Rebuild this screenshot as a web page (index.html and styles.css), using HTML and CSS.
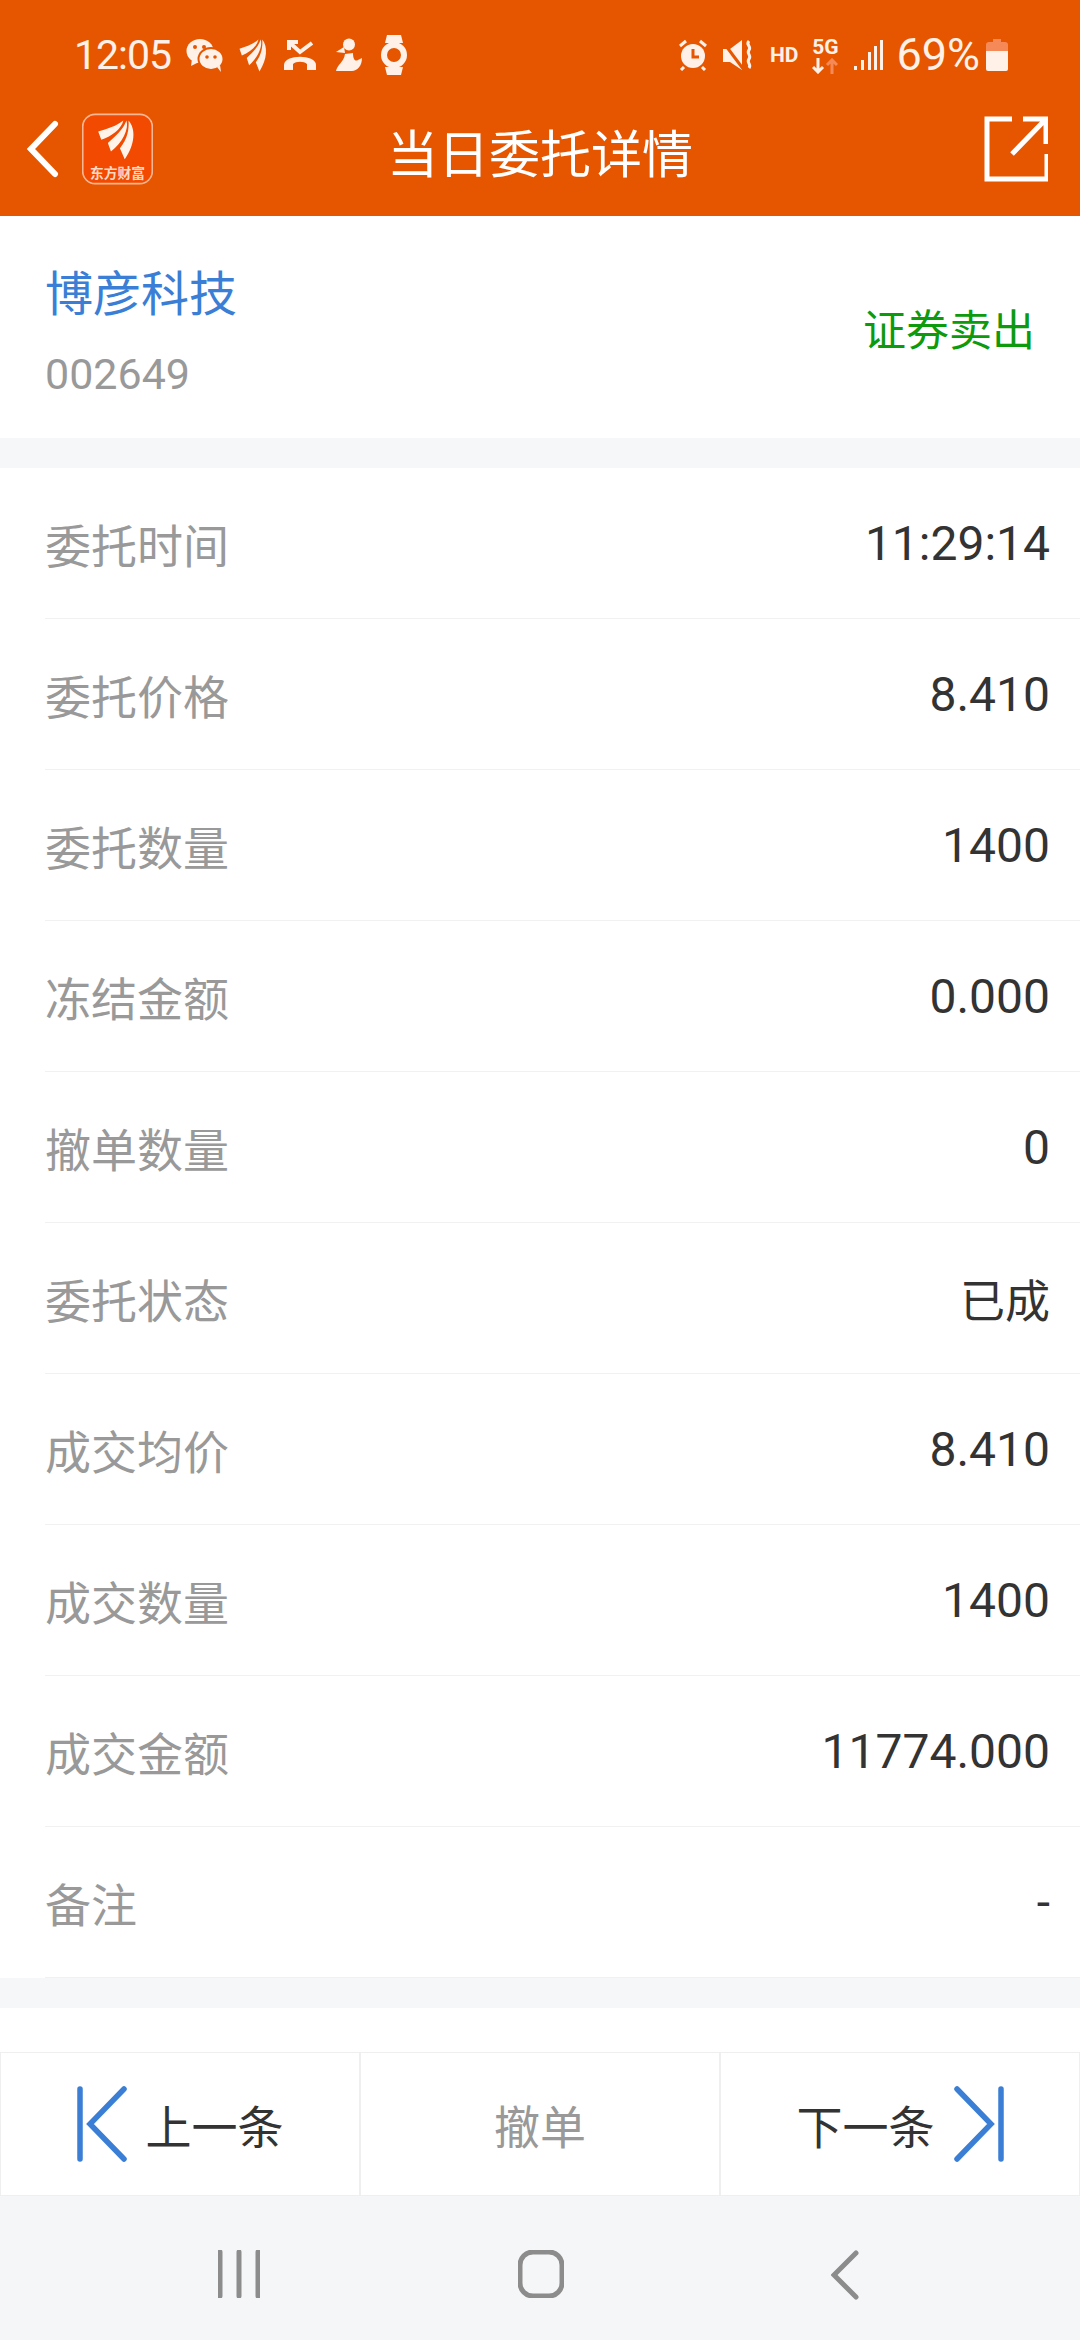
FILE: index.html
```html
<!DOCTYPE html>
<html lang="zh-CN">
<head>
    <meta charset="UTF-8">
    <meta name="viewport" content="width=device-width, initial-scale=1.0">
    <title>当日委托详情</title>
    <link rel="stylesheet" href="styles.css">
</head>
<body>
    <svg class="defs" width="0" height="0">
        <symbol id="feather" viewBox="113 58 112 116" preserveAspectRatio="none">
            <path d="M115 92C140 85 170 75 188 60C182 85 155 105 124 116Z"/>
            <path d="M143 125C165 105 185 90 197 60C205 85 185 125 152 150Z"/>
            <path d="M178 140C200 115 205 85 203 60C225 85 222 130 192 172Z"/>
        </symbol>
    </svg>
    <div class="page">
        <div class="top">
            <div class="status">
                <div class="status-left">
                    <span class="time">12:05</span>
                    <svg class="ic wechat" width="38" height="34" viewBox="0 0 38 34">
                        <ellipse cx="14" cy="13" rx="13.5" ry="12"/>
                        <path d="M6 21l-1 7 8-4z"/>
                        <ellipse class="cut" cx="25" cy="21" rx="12.5" ry="11"/>
                        <path d="M31 29l4 5-1-7z"/>
                        <circle class="hole" cx="9" cy="9" r="2"/>
                        <circle class="hole" cx="18" cy="9" r="2"/>
                        <circle class="hole" cx="21" cy="19" r="1.8"/>
                        <circle class="hole" cx="29" cy="19" r="1.8"/>
                    </svg>
                    <svg class="ic" width="29" height="33"><use href="#feather" width="29" height="33"/></svg>
                    <svg class="ic" width="34" height="32" viewBox="0 0 34 32">
                        <path class="line" d="M6 11V3h9M6 3l11 10L29 4"/>
                        <path d="M1 31v-5C1 15 33 15 33 26v5h-9v-6c-3-3-11-3-14 0v6z"/>
                    </svg>
                    <svg class="ic wide" width="28" height="34" viewBox="0 0 28 34">
                        <circle cx="14" cy="6.5" r="6"/>
                        <path d="M9 9L1 14l9 1z"/>
                        <path d="M1 33c1-6 8-9 9-17l8-1c0 6 2 9 5 7l4-2c0 8-5 13-10 13z"/>
                    </svg>
                    <svg class="ic wide" width="26" height="40" viewBox="0 0 26 40">
                        <path d="M6 0h14l2 8H4zM4 32h18l-2 8H6z"/>
                        <circle class="ring" cx="13" cy="20" r="10"/>
                    </svg>
                </div>
                <div class="status-right">
                    <svg class="ic" width="30" height="32" viewBox="0 0 30 32">
                        <circle cx="15" cy="17" r="12"/>
                        <path class="line thin" d="M2 7l6-5M28 7l-6-5M6 28l-3 3M24 28l3 3"/>
                        <path class="hand" d="M15 10v8h6"/>
                    </svg>
                    <svg class="ic" width="30" height="32" viewBox="0 0 30 32">
                        <path d="M0 10h7l12-9v30l-12-8H0z"/>
                        <path class="hand" d="M0 3l21 28"/>
                        <path class="line thin" d="M26 2c-4 4 3 5 0 9s3 5 0 9s3 5 0 9"/>
                    </svg>
                    <span class="hd">HD</span>
                    <div class="net">
                        <span class="net-name">5G</span>
                        <svg class="ic" width="26" height="16" viewBox="0 0 26 16">
                            <path class="line thin" d="M6 0v14M1 9l5 5 5-5"/>
                            <path class="line thin dim" d="M20 16V2M15 7l5-5 5 5"/>
                        </svg>
                    </div>
                    <svg class="ic signal" width="29" height="30" viewBox="0 0 29 30">
                        <rect x="0" y="26" width="3" height="4"/>
                        <rect x="7" y="20" width="3" height="10"/>
                        <rect x="14" y="12" width="3" height="18"/>
                        <rect x="20" y="6" width="3" height="24"/>
                        <rect x="26" y="0" width="3" height="30"/>
                    </svg>
                    <span class="percent">69%</span>
                    <svg class="ic" width="22" height="32" viewBox="0 0 22 32">
                        <path class="dim-fill" d="M7 0h8v3h4a3 3 0 0 1 3 3v8H0V6a3 3 0 0 1 3-3h4z"/>
                        <path d="M0 12h22v18a2 2 0 0 1-2 2H2a2 2 0 0 1-2-2z"/>
                    </svg>
                </div>
            </div>
            <div class="titlebar">
                <div class="title-left">
                    <svg class="back" width="32" height="58" viewBox="0 0 32 58">
                        <path d="M28 4L4 29l24 25"/>
                    </svg>
                    <svg class="logo" width="71" height="74" viewBox="68 40 206 205">
                        <rect class="logo-bg" x="70" y="42" width="202" height="201" rx="36"/>
                        <use href="#feather" x="113" y="58" width="112" height="116"/>
                        <text class="logo-text" x="171" y="226">东方财富</text>
                    </svg>
                </div>
                <h1 class="title">当日委托详情</h1>
                <div class="title-right">
                    <svg class="share" width="64" height="66" viewBox="0 0 64 66">
                        <path d="M28 3H3v60h60V38M28 38L61 4M39 3h23v25"/>
                    </svg>
                </div>
            </div>
        </div>

        <div class="stock">
            <div>
                <div class="stock-name">博彦科技</div>
                <div class="stock-code">002649</div>
            </div>
            <div class="stock-type">证券卖出</div>
        </div>

        <div class="list">
            <div class="row"><span class="label">委托时间</span><span class="value">11:29:14</span></div>
            <div class="row"><span class="label">委托价格</span><span class="value">8.410</span></div>
            <div class="row"><span class="label">委托数量</span><span class="value">1400</span></div>
            <div class="row"><span class="label">冻结金额</span><span class="value">0.000</span></div>
            <div class="row"><span class="label">撤单数量</span><span class="value">0</span></div>
            <div class="row"><span class="label">委托状态</span><span class="value value-cn">已成</span></div>
            <div class="row"><span class="label">成交均价</span><span class="value">8.410</span></div>
            <div class="row"><span class="label">成交数量</span><span class="value">1400</span></div>
            <div class="row"><span class="label">成交金额</span><span class="value">11774.000</span></div>
            <div class="row"><span class="label">备注</span><span class="value">-</span></div>
        </div>

        <div class="spacer"></div>

        <div class="actions">
            <div class="action">
                <svg class="step" width="50" height="76" viewBox="0 0 50 76">
                    <path d="M3 3v70M47 3L13 38l34 35"/>
                </svg>
                <span>上一条</span>
            </div>
            <div class="action off">撤单</div>
            <div class="action">
                <span>下一条</span>
                <svg class="step" width="50" height="76" viewBox="0 0 50 76">
                    <path d="M47 3v70M3 3l34 35L3 73"/>
                </svg>
            </div>
        </div>

        <div class="nav">
            <svg class="nav-ic" width="42" height="48" viewBox="0 0 42 48">
                <path d="M2 2v44M21 2v44M40 2v44"/>
            </svg>
            <svg class="nav-ic nav-home" width="46" height="48" viewBox="0 0 46 48">
                <rect x="2" y="2" width="42" height="44" rx="13"/>
            </svg>
            <svg class="nav-ic" width="28" height="50" viewBox="0 0 28 50">
                <path d="M25 3L3 25l22 22"/>
            </svg>
        </div>
    </div>
</body>
</html>
```

FILE: styles.css
```css
* {
    margin: 0;
    padding: 0;
    box-sizing: border-box;
}
body {
    width: 1080px;
    height: 2340px;
    overflow: hidden;
    font-family: Roboto, "Noto Sans CJK SC", sans-serif;
    background-color: white;
}
.defs {
    display: block;
    height: 0;
}
.page {
    width: 1080px;
    height: 2340px;
    display: flex;
    flex-direction: column;
}

/* orange header */
.top {
    height: 216px;
    background-color: #e65600;
    flex-shrink: 0;
}
.status {
    height: 103px;
    padding: 34px 72px 0 74px;
    display: flex;
    justify-content: space-between;
    align-items: flex-start;
    color: #fff1e8;
}
.status-left, .status-right {
    display: flex;
    align-items: center;
    height: 42px;
}
.status-left .ic {
    margin-left: 15px;
}
.status-left .wechat {
    margin-left: 15px;
}
.status-left .wide {
    margin-left: 18px;
}
.status-right .ic {
    margin-left: 15px;
}
.ic {
    fill: #fff1e8;
    flex-shrink: 0;
}
.ic .cut {
    stroke: #e65600;
    stroke-width: 2;
}
.ic .hole {
    fill: #e65600;
}
.ic .ring {
    fill: none;
    stroke: #fff1e8;
    stroke-width: 6;
}
.ic .line {
    fill: none;
    stroke: #fff1e8;
    stroke-width: 4;
}
.ic .thin {
    stroke-width: 3;
}
.ic .dim {
    stroke: #f58a58;
}
.ic .dim-fill {
    fill: #f58a58;
}
.ic .hand {
    fill: none;
    stroke: #e65600;
    stroke-width: 3;
}
.time {
    font-size: 41px;
    line-height: 42px;
    letter-spacing: -1px;
}
.hd {
    margin-left: 17px;
    font-size: 21px;
    font-weight: 700;
}
.net {
    margin-left: 14px;
    width: 26px;
    display: flex;
    flex-direction: column;
    align-items: center;
}
.net-name {
    font-size: 21px;
    line-height: 22px;
    font-weight: 700;
}
.net .ic {
    margin-left: 0;
}
.status-right .signal {
    margin-left: 16px;
}
.percent {
    margin-left: 13px;
    font-size: 45px;
    line-height: 42px;
}
.status-right .percent + .ic {
    margin-left: 6px;
}

.titlebar {
    display: grid;
    grid-template-columns: 1fr auto 1fr;
    align-items: center;
    height: 92px;
}
.title-left {
    display: flex;
    align-items: center;
    padding-left: 27px;
    gap: 23px;
}
.title-right {
    display: flex;
    justify-content: flex-end;
    padding-right: 32px;
}
.title {
    margin-top: 4px;
    font-size: 51px;
    font-weight: 400;
    color: white;
}
.back path, .share path {
    fill: none;
    stroke: white;
    stroke-linecap: round;
}
.back path {
    stroke-width: 6;
}
.share path {
    stroke-width: 5;
    stroke-linecap: butt;
}
.logo {
    fill: #fff3ea;
}
.logo-bg {
    fill: #f24a00;
    stroke: #f7b795;
    stroke-width: 5;
}
.logo-text {
    font-family: "Noto Sans CJK SC", sans-serif;
    font-size: 40px;
    font-weight: 700;
    text-anchor: middle;
    fill: #ffd9c4;
}

/* stock block */
.stock {
    height: 222px;
    padding: 10px 45px 0 45px;
    display: flex;
    justify-content: space-between;
    align-items: center;
    flex-shrink: 0;
}
.stock-name {
    font-size: 48px;
    line-height: 60px;
    color: #3a7fd5;
}
.stock-code {
    margin-top: 24px;
    font-size: 43px;
    line-height: 50px;
    color: #999;
}
.stock-type {
    margin-bottom: 10px;
    font-size: 43px;
    color: #0d9a0d;
}

/* detail rows */
.list {
    padding-left: 45px;
    border-top: 30px solid #f5f7f9;
    flex-shrink: 0;
}
.row {
    height: 151px;
    padding: 0 30px 0 0;
    display: flex;
    justify-content: space-between;
    align-items: center;
    border-bottom: 1px solid #f1f1f1;
}
.label {
    font-size: 46px;
    color: #999;
}
.value {
    font-size: 48px;
    color: #333;
}
.value-cn {
    font-size: 45px;
}

.spacer {
    height: 74px;
    flex-shrink: 0;
    border-top: 30px solid #f5f7f9;
}

/* bottom buttons */
.actions {
    display: grid;
    grid-template-columns: repeat(3, 1fr);
    height: 144px;
    flex-shrink: 0;
}
.action {
    display: flex;
    justify-content: center;
    align-items: center;
    gap: 19px;
    font-size: 46px;
    color: #333;
    border: 1px solid #efefef;
}
.action.off {
    color: #999;
}
.step {
    flex-shrink: 0;
}
.step path {
    fill: none;
    stroke: #3a7fd5;
    stroke-width: 5.5;
    stroke-linecap: round;
}

/* android nav */
.nav {
    flex: 1;
    background-color: #f5f6f8;
    padding: 54px 0 0 218px;
    display: flex;
    align-items: flex-start;
}
.nav-home {
    margin: 0 267px 0 258px;
}
.nav-ic path, .nav-ic rect {
    fill: none;
    stroke: #8c8c8c;
    stroke-width: 5;
    stroke-linecap: round;
}
```
